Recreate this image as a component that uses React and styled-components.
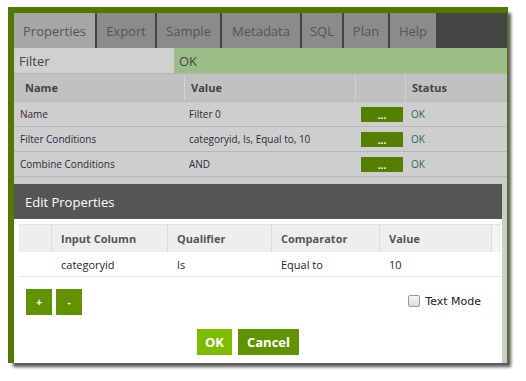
import React from 'react';
import styled, { createGlobalStyle } from 'styled-components';

const GlobalStyle = createGlobalStyle`
  body {
    margin: 0;
    background: #fff;
    font-family: "Open Sans", "Liberation Sans", sans-serif;
  }
`;

const Page = styled.div`
  width: 526px;
  height: 381px;
  padding: 7px 0 0 8px;
  box-sizing: border-box;
`;

const Frame = styled.div`
  width: 500px;
  height: 356px;
  box-sizing: border-box;
  border-top: 6px solid #4f7a00;
  border-left: 6px solid #4f7a00;
  border-right: 1px solid #4f7a00;
  background: #cccccc;
  display: flex;
  flex-direction: column;
  box-shadow: 4px 5px 3px -1px rgba(0, 0, 0, 0.65);
`;

const Tabs = styled.div`
  display: flex;
  gap: 2px;
  height: 35px;
  background: #444;
  flex-shrink: 0;
`;

const Tab = styled.div`
  width: ${(p) => p.w}px;
  background: ${(p) => (p.active ? '#a6a6a6' : '#8b8b8b')};
  color: #555;
  font-size: 13px;
  display: flex;
  align-items: center;
  justify-content: center;
`;

const FilterRow = styled.div`
  display: flex;
  height: 25px;
  border-bottom: 1px solid #b4b4b4;
  font-size: 13px;
  color: #444;
  flex-shrink: 0;
`;

const FilterCell = styled.div`
  width: ${(p) => (p.w ? `${p.w}px` : 'auto')};
  flex: ${(p) => (p.w ? 'none' : 1)};
  background: ${(p) => p.bg};
  display: flex;
  align-items: center;
  padding-left: 5px;
  box-sizing: border-box;
`;

const Grid = styled.div`
  display: grid;
  grid-template-columns: 170px 171px 50px 1fr;
`;

const HeadCell = styled.div`
  height: 28px;
  background: #c1c1c1;
  border-left: ${(p) => (p.first ? 'none' : '1px solid #d2d2d2')};
  border-bottom: 1px solid #b8b8b8;
  box-sizing: border-box;
  font-size: 11px;
  font-weight: 700;
  color: #444;
  display: flex;
  align-items: center;
  padding-left: ${(p) => (p.first ? 11 : 6)}px;
`;

const Cell = styled.div`
  height: 25px;
  background: #cecece;
  border-bottom: 1px solid #b8b8b8;
  box-sizing: border-box;
  font-size: 10px;
  color: #2f2b38;
  display: flex;
  align-items: center;
  padding-left: ${(p) => (p.first ? 6 : 5)}px;
`;

const DotsButton = styled.button`
  width: 42px;
  height: 15px;
  margin-left: 1px;
  border: none;
  background: #557f00;
  color: #fff;
  font-family: inherit;
  font-size: 10px;
  font-weight: 700;
  line-height: 10px;
  padding: 2px 0 0;
`;

const StatusText = styled.span`
  color: #2d6a4c;
  font-size: 10px;
  margin-left: 1px;
`;

const Dialog = styled.div`
  margin-top: 7px;
  margin-right: 5px;
  flex: 1;
  display: flex;
  flex-direction: column;
  background: #fff;
`;

const DialogHeader = styled.div`
  height: 35px;
  background: #555;
  color: #fff;
  font-size: 13px;
  display: flex;
  align-items: center;
  padding-left: 11px;
`;

const DialogBody = styled.div`
  padding: 5px 5px 0 5px;
  flex: 1;
  display: flex;
  flex-direction: column;
`;

const InnerGrid = styled.div`
  display: grid;
  grid-template-columns: 32px 116px 104px 108px 112px 1fr;
`;

const InnerHead = styled.div`
  height: 28px;
  background: ${(p) => (p.edge ? '#f3f3f3' : '#eeeeee')};
  border-left: ${(p) => (p.first ? 'none' : '1px solid #dddddd')};
  border-top: 1px solid #e2e2e2;
  box-sizing: border-box;
  font-size: 11px;
  font-weight: 700;
  color: #555;
  display: flex;
  align-items: center;
  padding-left: 9px;
`;

const InnerCell = styled.div`
  height: 25px;
  border-bottom: 1px solid #e6e6e6;
  box-sizing: border-box;
  font-size: 11px;
  color: #2a2433;
  display: flex;
  align-items: center;
  padding-left: 10px;
`;

const Toolbar = styled.div`
  display: flex;
  align-items: center;
  justify-content: space-between;
  padding: 12px 16px 0 7px;
`;

const SmallButtons = styled.div`
  display: flex;
  gap: 4px;
`;

const SmallButton = styled.button`
  width: 26px;
  height: 26px;
  border: none;
  padding: 0;
  background: #5f9300;
  color: #fff;
  font-family: inherit;
  font-size: 10px;
  font-weight: 700;
`;

const TextMode = styled.label`
  display: flex;
  align-items: center;
  gap: 5px;
  font-family: "DejaVu Sans", sans-serif;
  font-size: 11px;
  color: #222;
  margin-bottom: 2px;
`;

const Box = styled.span`
  width: 10px;
  height: 10px;
  border: 1px solid #999;
  border-radius: 2px;
  background: linear-gradient(#f4f4f4, #dcdcdc);
`;

const Actions = styled.div`
  display: flex;
  justify-content: center;
  gap: 6px;
  padding: 14px 20px 0 0;
`;

const ActionButton = styled.button`
  height: 26px;
  padding: 0 ${(p) => p.pad}px;
  border: none;
  background: ${(p) => p.bg};
  color: #fff;
  font-family: inherit;
  font-size: 13px;
  font-weight: 700;
`;

const tabs = [
  ['Properties', 81],
  ['Export', 58],
  ['Sample', 63],
  ['Metadata', 78],
  ['SQL', 40],
  ['Plan', 44],
  ['Help', 46],
];

const rows = [
  ['Name', 'Filter 0'],
  ['Filter Conditions', 'categoryid, Is, Equal to, 10'],
  ['Combine Conditions', 'AND'],
];

export default function App() {
  return (
    <Page>
      <GlobalStyle />
      <Frame>
        <Tabs>
          {tabs.map(([label, w], i) => (
            <Tab key={label} w={w} active={i === 0}>{label}</Tab>
          ))}
        </Tabs>
        <FilterRow>
          <FilterCell w={160} bg="#d0d0d0">Filter</FilterCell>
          <FilterCell bg="#9dbd86">OK</FilterCell>
        </FilterRow>
        <Grid>
          <HeadCell first>Name</HeadCell>
          <HeadCell>Value</HeadCell>
          <HeadCell />
          <HeadCell>Status</HeadCell>
          {rows.map(([name, value]) => (
            <React.Fragment key={name}>
              <Cell first>{name}</Cell>
              <Cell>{value}</Cell>
              <Cell><DotsButton>...</DotsButton></Cell>
              <Cell><StatusText>OK</StatusText></Cell>
            </React.Fragment>
          ))}
        </Grid>
        <Dialog>
          <DialogHeader>Edit Properties</DialogHeader>
          <DialogBody>
            <InnerGrid>
              <InnerHead first />
              <InnerHead>Input Column</InnerHead>
              <InnerHead>Qualifier</InnerHead>
              <InnerHead>Comparator</InnerHead>
              <InnerHead>Value</InnerHead>
              <InnerHead edge />
              <InnerCell />
              <InnerCell>categoryid</InnerCell>
              <InnerCell>Is</InnerCell>
              <InnerCell>Equal to</InnerCell>
              <InnerCell>10</InnerCell>
              <InnerCell />
            </InnerGrid>
            <Toolbar>
              <SmallButtons>
                <SmallButton>+</SmallButton>
                <SmallButton>-</SmallButton>
              </SmallButtons>
              <TextMode>
                <Box />
                Text Mode
              </TextMode>
            </Toolbar>
            <Actions>
              <ActionButton bg="#7dbd00" pad={8}>OK</ActionButton>
              <ActionButton bg="#5f9300" pad={9}>Cancel</ActionButton>
            </Actions>
          </DialogBody>
        </Dialog>
      </Frame>
    </Page>
  );
}
